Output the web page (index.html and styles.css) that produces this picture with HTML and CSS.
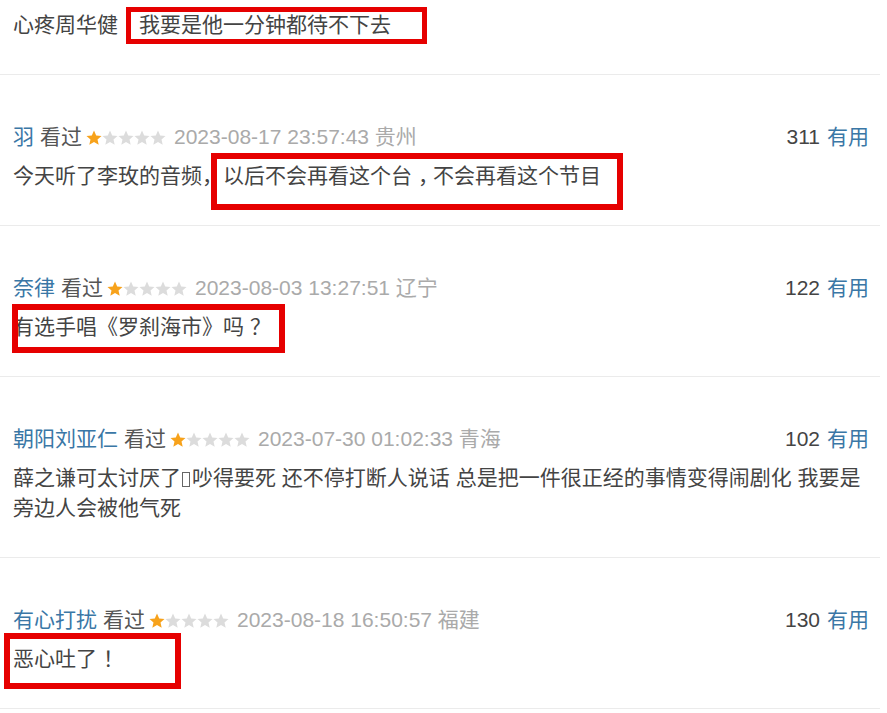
FILE: index.html
```html
<!DOCTYPE html>
<html lang="zh-CN">
<head>
<meta charset="utf-8">
<title>短评</title>
<link rel="stylesheet" href="styles.css">
</head>
<body>
<div class="comments">
  <div class="comment comment--cut">
    <p class="text">心疼周华健　我要是他一分钟都待不下去</p>
    <span class="mark mark--0"></span>
  </div>

  <div class="comment">
    <div class="info">
      <span class="meta"><a class="name">羽</a><span class="seen">看过</span><svg class="stars" viewBox="0 0 80 16"><use href="#s1"/></svg><span class="time">2023-08-17 23:57:43 贵州</span></span>
      <span class="votes"><span class="count">311</span><a class="useful">有用</a></span>
    </div>
    <p class="text">今天听了李玫的音频，以后不会再看这个台<span class="punc">，</span>不会再看这个节目</p>
    <span class="mark mark--1"></span>
  </div>

  <div class="comment">
    <div class="info">
      <span class="meta"><a class="name">奈律</a><span class="seen">看过</span><svg class="stars" viewBox="0 0 80 16"><use href="#s1"/></svg><span class="time">2023-08-03 13:27:51 辽宁</span></span>
      <span class="votes"><span class="count">122</span><a class="useful">有用</a></span>
    </div>
    <p class="text">有选手唱《罗刹海市》吗<span class="punc">？</span></p>
    <span class="mark mark--2"></span>
  </div>

  <div class="comment">
    <div class="info">
      <span class="meta"><a class="name">朝阳刘亚仁</a><span class="seen">看过</span><svg class="stars" viewBox="0 0 80 16"><use href="#s1"/></svg><span class="time">2023-07-30 01:02:33 青海</span></span>
      <span class="votes"><span class="count">102</span><a class="useful">有用</a></span>
    </div>
    <p class="text">薛之谦可太讨厌了<span class="tofu"></span>吵得要死 还不停打断人说话 总是把一件很正经的事情变得闹剧化 我要是旁边人会被他气死</p>
  </div>

  <div class="comment">
    <div class="info">
      <span class="meta"><a class="name">有心打扰</a><span class="seen">看过</span><svg class="stars" viewBox="0 0 80 16"><use href="#s1"/></svg><span class="time">2023-08-18 16:50:57 福建</span></span>
      <span class="votes"><span class="count">130</span><a class="useful">有用</a></span>
    </div>
    <p class="text">恶心吐了<span class="punc">！</span></p>
    <span class="mark mark--4"></span>
  </div>
</div>

<svg class="defs" width="0" height="0">
  <defs>
    <polygon id="star" points="8,0.6 10.2,5.5 15.5,6 11.5,9.5 12.7,14.8 8,12 3.3,14.8 4.5,9.5 0.5,6 5.8,5.5"/>
    <g id="s1">
      <use href="#star" x="0" fill="#f7a21b"/>
      <use href="#star" x="16" fill="#dcdcdc"/>
      <use href="#star" x="32" fill="#dcdcdc"/>
      <use href="#star" x="48" fill="#dcdcdc"/>
      <use href="#star" x="64" fill="#dcdcdc"/>
    </g>
  </defs>
</svg>
</body>
</html>
```

FILE: styles.css
```css
* { box-sizing: border-box; }

html, body {
  margin: 0;
  padding: 0;
  background: #fff;
}

body {
  font-family: "Liberation Sans", "Noto Sans CJK SC", sans-serif;
  font-size: 21px;
  color: #444;
  width: 887px;
  height: 713px;
  overflow: hidden;
}

.comments {
  width: 880px;
}

.comment {
  position: relative;
  padding: 49px 11px 34px 13px;
  border-bottom: 1px solid #ebebeb;
}

.comment--cut {
  padding-top: 10px;
}

.info {
  display: flex;
  justify-content: space-between;
  align-items: center;
  height: 26px;
  line-height: 26px;
  margin-bottom: 11px;
  white-space: nowrap;
}

.meta {
  display: flex;
  align-items: center;
}

.name {
  margin-right: 6px;
}

.name, .useful {
  color: #3a77a6;
  text-decoration: none;
}

.useful {
  margin-left: 7px;
}

.seen {
  color: #555;
}

.stars {
  width: 80px;
  height: 16px;
  margin: 1px 8px 0 4px;
}

.time {
  color: #aaa;
}

.count {
  color: #444;
}

.text {
  margin: 0;
  line-height: 30px;
  color: #444;
}

.punc {
  display: inline-block;
  width: 1em;
  line-height: 1;
  padding-left: 6px;
  text-align: left;
}

.tofu {
  display: inline-block;
  width: 8px;
  height: 15px;
  border: 1px solid #666;
  margin: 0 2px 0 1px;
  vertical-align: -2px;
}

.mark {
  position: absolute;
  border: 5px solid #e60000;
}

.mark--0 { left: 126px; top: 7px; width: 301px; height: 37px; }
.mark--1 { left: 211px; top: 78px; width: 412px; height: 57px; border-width: 6px; }
.mark--2 { left: 12px; top: 78px; width: 273px; height: 49px; border-width: 6px; }
.mark--4 { left: 4px; top: 75px; width: 177px; height: 56px; border-width: 6px; }

.defs {
  position: absolute;
  width: 0;
  height: 0;
}
```
